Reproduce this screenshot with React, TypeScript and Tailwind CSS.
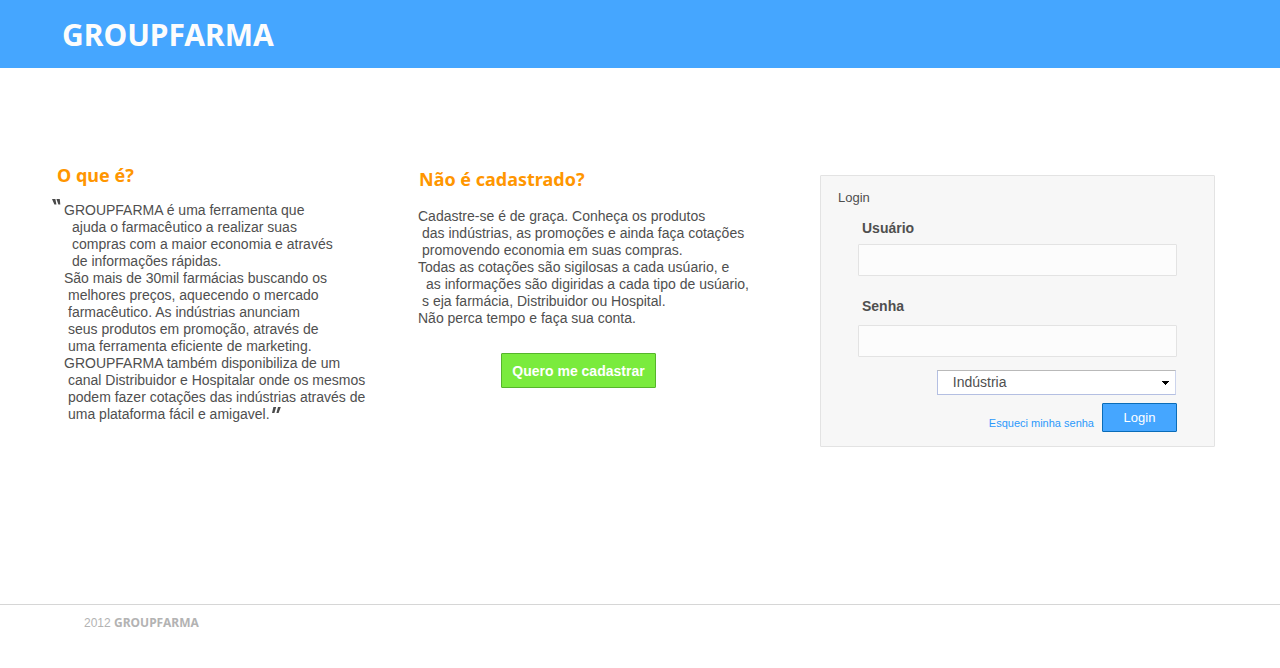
import { ChangeEvent, FormEvent, useState } from 'react';

type Line = { text: string; indent: 0 | 1 | 2 };

const aboutLines: Line[] = [
  { text: 'GROUPFARMA é uma ferramenta que', indent: 0 },
  { text: 'ajuda o farmacêutico a realizar suas', indent: 2 },
  { text: 'compras com a maior economia e através', indent: 2 },
  { text: 'de informações rápidas.', indent: 2 },
  { text: 'São mais de 30mil farmácias buscando os', indent: 0 },
  { text: 'melhores preços, aquecendo o mercado', indent: 1 },
  { text: 'farmacêutico. As indústrias anunciam', indent: 1 },
  { text: 'seus produtos em promoção, através de', indent: 1 },
  { text: 'uma ferramenta eficiente de marketing.', indent: 1 },
  { text: 'GROUPFARMA também disponibiliza de um', indent: 0 },
  { text: 'canal Distribuidor e Hospitalar onde os mesmos', indent: 1 },
  { text: 'podem fazer cotações das indústrias através de', indent: 1 },
  { text: 'uma plataforma fácil e amigavel.', indent: 1 },
];

const signupLines: Line[] = [
  { text: 'Cadastre-se é de graça. Conheça os produtos', indent: 0 },
  { text: 'das indústrias, as promoções e ainda faça cotações', indent: 1 },
  { text: 'promovendo economia em suas compras.', indent: 1 },
  { text: 'Todas as cotações são sigilosas a cada usúario, e', indent: 0 },
  { text: 'as informações são digiridas a cada tipo de usúario,', indent: 2 },
  { text: 's eja farmácia, Distribuidor ou Hospital.', indent: 1 },
  { text: 'Não perca tempo e faça sua conta.', indent: 0 },
];

const indents = ['pl-0', 'pl-1', 'pl-2'];

function OpenQuote() {
  return (
    <svg className="h-3 w-3 shrink-0" viewBox="0 0 12 12" fill="#4a4a4a" aria-hidden="true">
      <path d="M0 0h3.4l1 5.4H2.4zM4.4 0h3.4l.5 5.4H6.4z" />
    </svg>
  );
}

function CloseQuote() {
  return (
    <svg className="ml-0.5 inline-block h-3 w-[9px] align-baseline" viewBox="0 0 9 12" fill="#4a4a4a" aria-hidden="true">
      <path d="M1.4 0h2.8L2.4 6H0zM6 0h2.8L6.6 6H4.4z" />
    </svg>
  );
}

function Lines({ lines, closing }: { lines: Line[]; closing?: boolean }) {
  return (
    <p className="text-[14px] leading-[17px] whitespace-nowrap">
      {lines.map((line, i) => (
        <span key={line.text} className={`block h-[17px] ${indents[line.indent]}`}>
          {line.text}
          {closing && i === lines.length - 1 && <CloseQuote />}
        </span>
      ))}
    </p>
  );
}

const headingClass =
  "font-['Noto_Sans','Open_Sans',sans-serif] text-[18px] leading-6 font-bold text-[#ff9600]";
const fieldClass =
  'block h-8 w-full rounded-[1px] border border-[#e3e3e3] bg-[#fcfcfc] px-2 text-[14px] outline-none focus:border-[#45a6ff]';

function LoginForm() {
  const [profile, setProfile] = useState('Indústria');
  return (
    <form
      onSubmit={(e: FormEvent) => e.preventDefault()}
      className="mt-3 rounded-[1px] border border-[#e3e3e3] bg-[#f7f7f7] px-[37px] py-3.5"
    >
      <h2 className="-ml-5 text-[13px] leading-4">Login</h2>
      <label htmlFor="user" className="mt-3.5 block pl-1 text-[14px] leading-4 font-bold">
        Usuário
      </label>
      <input id="user" type="text" className={`mt-2 ${fieldClass}`} />
      <label htmlFor="password" className="mt-[22px] block pl-1 text-[14px] leading-4 font-bold">
        Senha
      </label>
      <input id="password" type="password" className={`mt-[11px] ${fieldClass}`} />
      <div className="mt-[13px] mr-px ml-auto grid w-3/4">
        <select
          aria-label="Tipo de usuário"
          value={profile}
          onChange={(e: ChangeEvent<HTMLSelectElement>) => setProfile(e.target.value)}
          className="col-start-1 row-start-1 h-[25px] w-full appearance-none border border-t-[#b9b9b9] border-r-[#ccd4ec] border-b-[#b4bfe2] border-l-[#b4bfe2] bg-white pl-[15px] text-[14px] leading-[23px] outline-none"
        >
          <option>Indústria</option>
          <option>Distribuidor</option>
          <option>Farmácia</option>
          <option>Hospital</option>
        </select>
        <svg
          className="pointer-events-none col-start-1 row-start-1 mr-[7px] h-1 w-[7px] self-center justify-self-end"
          viewBox="0 0 7 4"
          shapeRendering="crispEdges"
          aria-hidden="true"
        >
          <path d="M0 0h7v1H6v1H5v1H4v1H3V3H2V2H1V1H0z" />
        </svg>
      </div>
      <div className="mt-2 flex items-center justify-end gap-2">
        <a href="#senha" className="mt-2.5 text-[11px] leading-4 text-[#2b99fb]">
          Esqueci minha senha
        </a>
        <button
          type="submit"
          className="h-[29px] w-[75px] rounded-[1px] border border-[#0a6cb8] bg-[#45a6ff] text-[13px] leading-4 text-white"
        >
          Login
        </button>
      </div>
    </form>
  );
}

export default function App() {
  return (
    <div className="flex min-h-screen flex-col bg-white font-['Liberation_Sans',Arial,sans-serif] text-[#4f4f4f]">
      <header className="flex h-[68px] items-center bg-[#45a6ff] px-[62px] pt-0.5">
        <h1 className="font-['Noto_Sans','Open_Sans',sans-serif] text-[30px] leading-10 font-bold text-[#fcfcfc]">
          GROUPFARMA
        </h1>
      </header>

      <main className="grid flex-1 grid-cols-[366fr_402fr_395fr] items-start pt-[95px] pr-[65px] pb-10 pl-[52px]">
        <section>
          <h2 className={`pl-[5px] ${headingClass}`}>O que é?</h2>
          <div className="mt-3 flex">
            <OpenQuote />
            <div className="pt-[3px]">
              <Lines lines={aboutLines} closing />
            </div>
          </div>
        </section>

        <section className="pt-1">
          <h2 className={`pl-px ${headingClass}`}>Não é cadastrado?</h2>
          <div className="mt-[17px]">
            <Lines lines={signupLines} />
          </div>
          <button
            type="button"
            className="mt-[26px] ml-[83px] h-[35px] w-[155px] rounded-[1px] border border-[#56b52b] bg-[#7aeb3d] text-[14px] leading-4 font-bold whitespace-nowrap text-white"
          >
            Quero me cadastrar
          </button>
        </section>

        <LoginForm />
      </main>

      <footer className="h-16 border-t border-[#d6d6d6] px-[84px] pt-2.5 text-[12px] leading-4 text-[#b3b3b3]">
        2012 <strong className="font-['Noto_Sans','Open_Sans',sans-serif]">GROUPFARMA</strong>
      </footer>
    </div>
  );
}
